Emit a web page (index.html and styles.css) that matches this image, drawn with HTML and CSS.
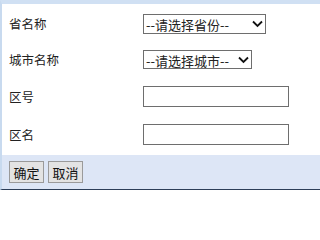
FILE: index.html
```html
<!DOCTYPE html>
<html lang="zh">
<head>
<meta charset="utf-8">
<link rel="stylesheet" href="styles.css">
</head>
<body>
<div class="panel">
  <div class="form">
    <div class="row r1">
      <label class="label">省名称</label>
      <span class="sel w1">
        <select><option>--请选择省份--</option></select>
        <svg class="chev" width="11" height="8" viewBox="0 0 11 8"><path d="M1 1.5 L5.5 6 L10 1.5" fill="none" stroke="#111" stroke-width="1.8"/></svg>
      </span>
    </div>
    <div class="row r2">
      <label class="label">城市名称</label>
      <span class="sel w2">
        <select><option>--请选择城市--</option></select>
        <svg class="chev" width="11" height="8" viewBox="0 0 11 8"><path d="M1 1.5 L5.5 6 L10 1.5" fill="none" stroke="#111" stroke-width="1.8"/></svg>
      </span>
    </div>
    <div class="row r3">
      <label class="label">区号</label>
      <input class="txt" type="text">
    </div>
    <div class="row r4">
      <label class="label">区名</label>
      <input class="txt" type="text">
    </div>
  </div>
  <div class="footer">
    <button class="btn">确定</button>
    <button class="btn">取消</button>
  </div>
</div>
</body>
</html>
```
FILE: styles.css
```css
html, body {
  margin: 0;
  padding: 0;
  background: #fff;
  font-family: "Noto Sans CJK SC", "Noto Sans", sans-serif;
  font-size: 12px;
  color: #222;
}
.panel {
  border-top: 4px solid #d0e0f3;
  border-left: 2px solid #c8daef;
  border-bottom: 1px solid #2c3e58;
  box-shadow: 0 1px 0 #e6f0fa;
}
.form {
  display: flex;
  flex-direction: column;
  padding-top: 10px;
}
.row {
  display: flex;
  align-items: center;
  height: 20px;
}
.r1 { margin-bottom: 16px; }
.r2 { margin-bottom: 17px; height: 19px; }
.r3 { margin-bottom: 17px; height: 21px; }
.r4 { height: 21px; margin-bottom: 10px; }
.label {
  width: 134px;
  padding-left: 7px;
  line-height: 20px;
  font-size: 12.5px;
}
.sel {
  position: relative;
  display: inline-block;
  height: 100%;
}
.sel select {
  appearance: none;
  -webkit-appearance: none;
  box-sizing: border-box;
  width: 100%;
  height: 100%;
  margin: 0;
  padding: 0 0 0 2px;
  border: 1px solid #6e6e6e;
  border-radius: 0;
  background: #fff;
  font-family: inherit;
  font-size: 13px;
  color: #222;
}
.w1 { width: 123px; }
.w2 { width: 109px; }
.chev {
  position: absolute;
  right: 3px;
  top: 50%;
  margin-top: -4px;
}
.txt {
  box-sizing: border-box;
  width: 146px;
  height: 100%;
  margin: 0;
  border: 1px solid #6e6e6e;
  border-radius: 0;
  padding: 0 2px;
  background: #fff;
}
.footer {
  background: #dde6f6;
  height: 34px;
  display: flex;
  align-items: center;
  gap: 4px;
  padding-left: 7px;
}
.btn {
  box-sizing: border-box;
  height: 22px;
  width: 35px;
  margin: 0;
  padding: 0;
  border: 1px solid #9a9a9a;
  border-radius: 0;
  background: #e3e3e3;
  font-family: inherit;
  font-size: 13px;
  color: #111;
}
```
